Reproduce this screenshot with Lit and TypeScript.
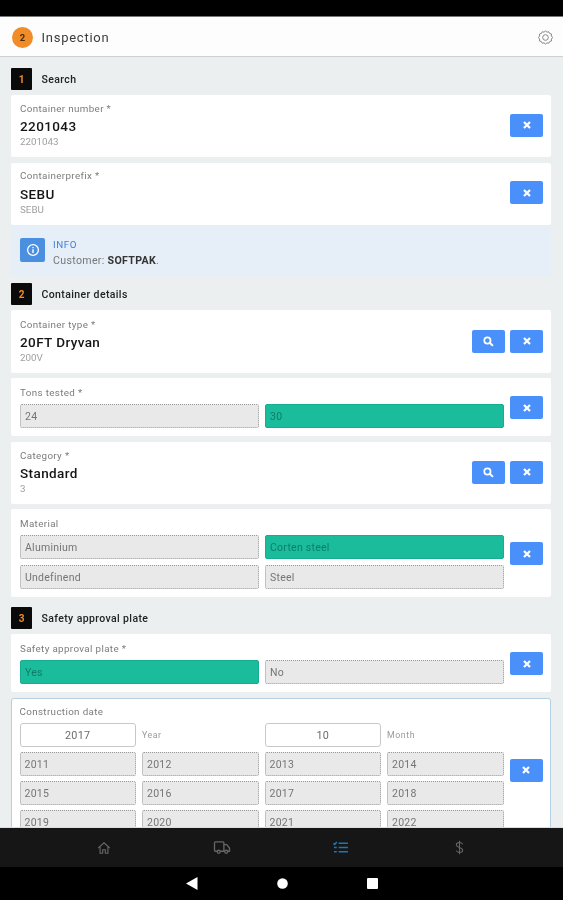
import { LitElement, html, css } from "lit";
import { customElement } from "lit/decorators.js";

const xIcon = html`<svg class="ic" viewBox="0 0 10 10" width="10" height="10"><path d="M2 2l6 6M8 2l-6 6" stroke="#fff" stroke-width="2.2" fill="none"/></svg>`;
const searchIcon = html`<svg class="ic" viewBox="0 0 12 12" width="11" height="11"><circle cx="4.8" cy="4.8" r="3.4" stroke="#fff" stroke-width="1.9" fill="none"/><path d="M7.4 7.4l3.4 3.4" stroke="#fff" stroke-width="2.2" fill="none"/></svg>`;

@customElement("app-root")
export class AppRoot extends LitElement {
  static styles = css`
    :host { display: block; width: 563px; height: 900px; overflow: hidden; font-family: Roboto, "Liberation Sans", sans-serif; }
    .root { height: 900px; display: flex; flex-direction: column; background: #ebeff0; filter: blur(0.6px); }
    .status { height: 17px; box-sizing: border-box; background: #000; flex: none; border-bottom: 1px solid #777; }
    .header { flex: none; height: 40px; box-sizing: border-box; background: #fdfdfd; border-bottom: 1.5px solid #ccd0d1; display: flex; align-items: center; padding: 2px 10px 0 12px; }
    .step { width: 21px; height: 21px; border-radius: 50%; background: #f28c28; color: #4a2c08; font-size: 9.5px; font-weight: 700; display: flex; align-items: center; justify-content: center; }
    .title { margin-left: 8.5px; font-size: 13px; letter-spacing: 0.75px; color: #3c3c3c; flex: 1; }
    .main { flex: 1; min-height: 0; overflow: hidden; padding: 0 12px 0 11px; }
    .sec { display: flex; align-items: center; height: 22px; margin: 8px 0 5px; }
    .sec.first { margin-top: 11px; }
    .sec.third { margin-top: 10.5px; }
    .num { width: 21px; height: 22px; background: #0a0a0a; color: #f28c28; font-size: 10px; font-weight: 700; display: flex; align-items: center; justify-content: center; border-radius: 1px; }
    .sec-t { margin-left: 9.5px; font-size: 10.5px; font-weight: 500; color: #222; letter-spacing: 0.38px; }
    .card { background: #fff; border-radius: 2px; padding: 7.5px 8px 9px 9px; display: flex; align-items: center; gap: 6px; margin-bottom: 5.5px; box-sizing: border-box; }
    .card.opt-card { padding-top: 9px; padding-bottom: 8px; }
    .card.before-info { margin-bottom: 0.5px; }
    .card.tall { padding-top: 8.5px; margin-bottom: 5px; }
    .card.wide-gap { margin-bottom: 6px; }
    .card.mat-gap { margin-bottom: 5px; }
    .card.sec-end { margin-bottom: 0; padding-bottom: 7.5px; }
    .grow { flex: 1; min-width: 0; }
    .label { font-size: 9.8px; line-height: 12px; color: #7c7c7c; letter-spacing: 0.36px; }
    .value { font-size: 13.5px; line-height: 18px; font-weight: 500; color: #151515; margin-top: 2.5px; letter-spacing: 0.4px; }
    .sub { font-size: 9.8px; line-height: 12px; color: #a0a0a0; margin-top: 1px; }
    .btns { display: flex; gap: 5px; }
    .btn { width: 33px; height: 23px; background: #4a90fb; border-radius: 2px; display: flex; align-items: center; justify-content: center; }
    .ic { display: block; }
    .opts { display: grid; grid-template-columns: 1fr 1fr; gap: 6px; margin-top: 5px; }
    .opts.four { grid-template-columns: repeat(4, 1fr); row-gap: 5px; }
    .opt { height: 24px; box-sizing: border-box; background: #e9e9e9; border: 1px dotted #999; border-radius: 2px; color: #757575; font-size: 10.5px; letter-spacing: 0.25px; display: flex; align-items: center; padding-left: 4px; }
    .opt.on { background: #1abc9c; border: 1px solid #17ad90; color: #0f7d69; }
    .field { display: flex; align-items: center; height: 24px; box-sizing: border-box; border: 1px solid #c9c9c9; border-bottom-width: 1.5px; border-radius: 3px; background: #fff; justify-content: center; font-size: 10.8px; color: #6c6c6c; letter-spacing: 0.3px; }
    .cap { display: flex; align-items: center; font-size: 8.8px; letter-spacing: 0.55px; color: #9a9a9a; }
    .focus { border: 1.5px solid #b5cfe3; padding: 7.5px 7.5px 6.5px 7.5px; border-radius: 3px; }
    .info { background: #e6eef8; height: 50px; padding: 0 9px; display: flex; align-items: center; gap: 8px; }
    .info-ic { width: 25px; height: 24px; background: #4a8fe0; border-radius: 2px; display: flex; align-items: center; justify-content: center; }
    .info-txt { padding-top: 5px; }
    .info-h { font-size: 9.8px; line-height: 13px; color: #3d80dc; letter-spacing: 0.55px; }
    .info-b { font-size: 10.6px; line-height: 14px; margin-top: 3px; color: #777; letter-spacing: 0.33px; }
    .info-b b { font-weight: 700; color: #333; }
    .nav { flex: none; height: 40px; background: #161616; padding: 0 45px; display: grid; grid-template-columns: repeat(4, 118.3px); border-top: 1px solid #ddd; box-sizing: border-box; }
    .nav div { display: flex; align-items: center; justify-content: center; }
    .sys { flex: none; height: 33px; background: #000; display: flex; align-items: center; justify-content: center; gap: 79px; }
  `;

  private textCard(label: string, value: string, sub: string, search = false, cls = "") {
    return html`<div class="card ${cls}">
      <div class="grow">
        <div class="label">${label}</div>
        <div class="value">${value}</div>
        <div class="sub">${sub}</div>
      </div>
      <div class="btns">
        ${search ? html`<div class="btn">${searchIcon}</div>` : ""}
        <div class="btn">${xIcon}</div>
      </div>
    </div>`;
  }

  private optCard(label: string, opts: [string, boolean][], cls = "") {
    return html`<div class="card opt-card ${cls}">
      <div class="grow">
        <div class="label">${label}</div>
        <div class="opts">${opts.map(([t, on]) => html`<div class="opt ${on ? "on" : ""}">${t}</div>`)}</div>
      </div>
      <div class="btn">${xIcon}</div>
    </div>`;
  }

  render() {
    const years = [2011, 2012, 2013, 2014, 2015, 2016, 2017, 2018, 2019, 2020, 2021, 2022];
    return html`<div class="root">
      <div class="status"></div>
      <div class="header">
        <div class="step">2</div>
        <div class="title">Inspection</div>
        <svg viewBox="0 0 16 16" width="15" height="15" fill="none" stroke="#808080" stroke-width="1"><path d="M8 1l1.600 1.300 1.900-.4 1 1.800 1.900.6-.1 2L15.500 8l-1.200 1.700.1 2-1.900.6-1 1.800-1.900-.4L8 15l-1.600-1.300-1.900.4-1-1.800-1.900-.6.1-2L.5 8l1.200-1.700-.1-2 1.900-.6 1-1.800 1.900.4z"/><circle cx="8" cy="8" r="3"/></svg>
      </div>
      <div class="main">
        <div class="sec first"><div class="num">1</div><div class="sec-t">Search</div></div>
        ${this.textCard("Container number *", "2201043", "2201043")}
        ${this.textCard("Containerprefix *", "SEBU", "SEBU", false, "before-info")}
        <div class="info">
          <div class="info-ic"><svg viewBox="0 0 14 14" width="14" height="14" fill="none" stroke="#fff"><circle cx="7" cy="7" r="5.400" stroke-width="1.300"/><path d="M7 4v1.200M7 6.300v3.700" stroke-width="1.400"/></svg></div>
          <div class="info-txt">
            <div class="info-h">INFO</div>
            <div class="info-b">Customer: <b>SOFTPAK</b>.</div>
          </div>
        </div>
        <div class="sec"><div class="num">2</div><div class="sec-t">Container details</div></div>
        ${this.textCard("Container type *", "20FT Dryvan", "200V", true, "tall")}
        ${this.optCard("Tons tested *", [["24", false], ["30", true]], "wide-gap")}
        ${this.textCard("Category *", "Standard", "3", true, "mat-gap")}
        ${this.optCard("Material", [["Aluminium", false], ["Corten steel", true], ["Undefinend", false], ["Steel", false]], "sec-end")}
        <div class="sec third"><div class="num">3</div><div class="sec-t">Safety approval plate</div></div>
        ${this.optCard("Safety approval plate *", [["Yes", true], ["No", false]])}
        <div class="card focus">
          <div class="grow">
            <div class="label">Construction date</div>
            <div class="opts four">
              <div class="field">2017</div><div class="cap">Year</div>
              <div class="field">10</div><div class="cap">Month</div>
              ${years.map((y) => html`<div class="opt">${y}</div>`)}
            </div>
          </div>
          <div class="btn">${xIcon}</div>
        </div>
      </div>
      <div class="nav">
        <div><svg viewBox="0 0 16 16" width="14" height="14" fill="none" stroke="#666" stroke-width="1.300"><path d="M1.500 8L8 2l6.500 6M3.500 6.500V14h3v-4h3v4h3V6.500"/></svg></div>
        <div><svg viewBox="0 0 18 16" width="18" height="15" fill="none" stroke="#666" stroke-width="1.400"><path d="M4 12H2a1 1 0 0 1-1-1V3a1 1 0 0 1 1-1h8a1 1 0 0 1 1 1v9H7M11 5h3l3 3.500V12h-2M11 12h1"/><circle cx="5.500" cy="12.500" r="1.600"/><circle cx="13.500" cy="12.500" r="1.600"/></svg></div>
        <div><svg viewBox="0 0 16 14" width="15" height="13" fill="none" stroke="#1a77b8" stroke-width="1.700"><path d="M6 2.500h10M6 7h10M6 11.500h10M.5 2.500l1.200 1.200L4 1M1 7h3M1 11.500h3"/></svg></div>
        <div><svg viewBox="0 0 10 16" width="9" height="15" fill="none" stroke="#666" stroke-width="1.200"><path d="M8.500 4.500C8 3 6.500 2.500 5 2.500 3 2.500 1.500 3.500 1.500 5S3 7.300 5 8s3.500 1.300 3.500 3-1.500 2.500-3.500 2.500c-1.600 0-3-.6-3.500-2M5 .5v15"/></svg></div>
      </div>
      <div class="sys">
        <svg viewBox="0 0 12 13" width="12" height="13"><path d="M11.500 0v13L0 6.500z" fill="#fff"/></svg>
        <svg viewBox="0 0 11 11" width="11" height="11"><circle cx="5.500" cy="5.500" r="5.300" fill="#fff"/></svg>
        <svg viewBox="0 0 11 11" width="11" height="11"><rect width="11" height="11" rx="1" fill="#fff"/></svg>
      </div>
    </div>`;
  }
}
